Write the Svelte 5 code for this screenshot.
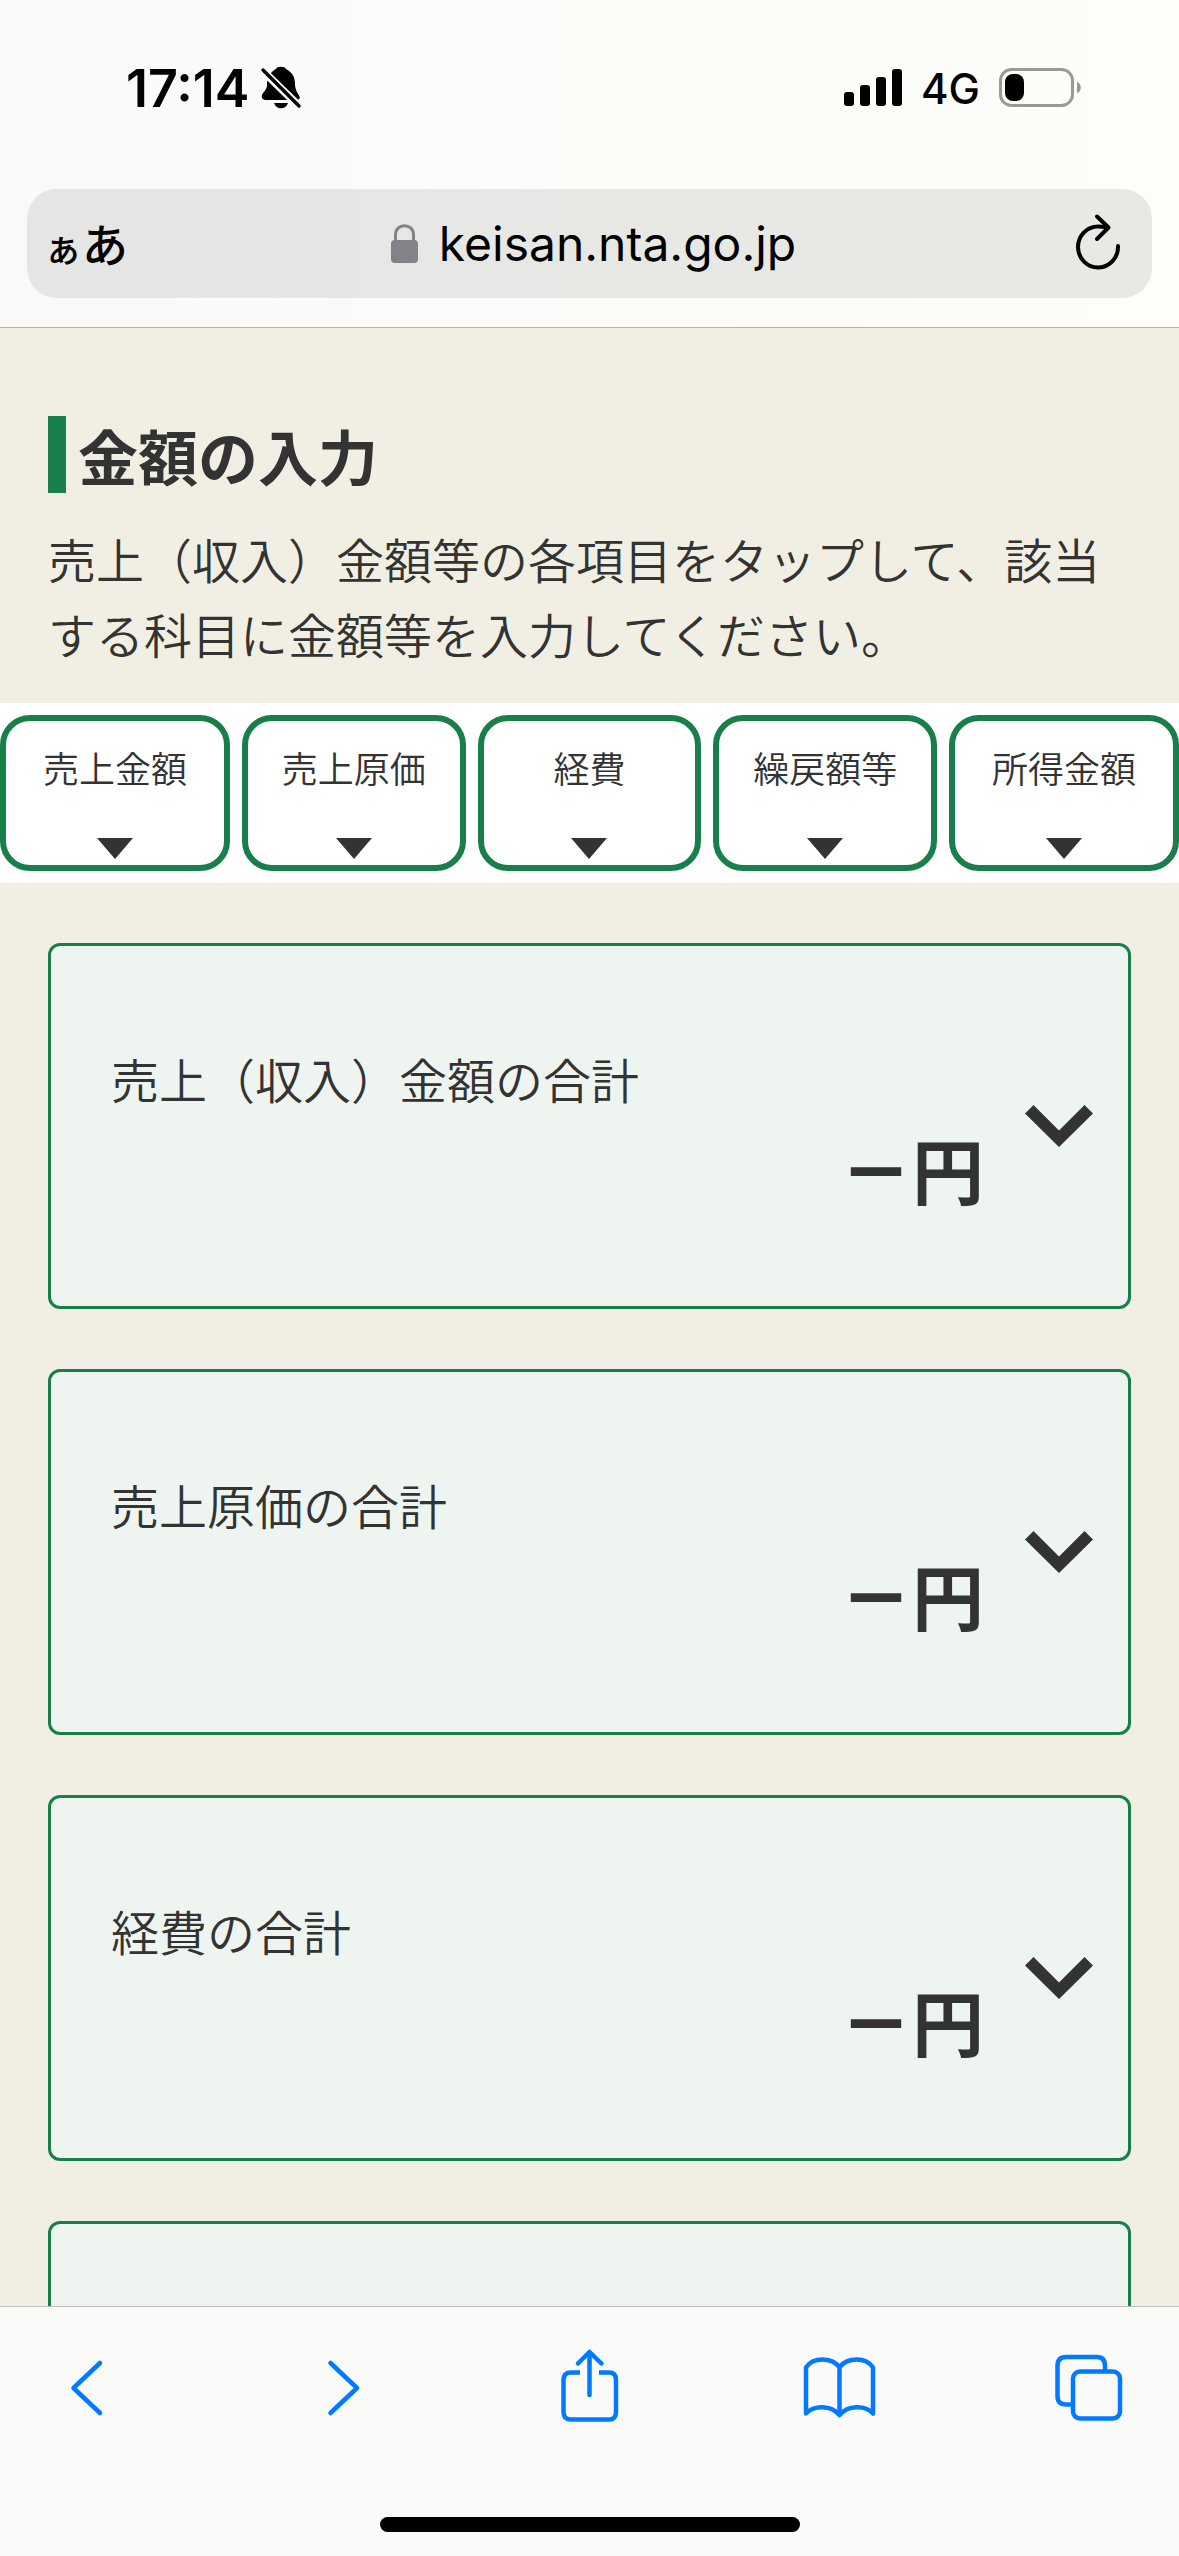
<script>
    const url = "keisan.nta.go.jp";

    const tabs = ["売上金額", "売上原価", "経費", "繰戻額等", "所得金額"];

    let sections = $state([
        { label: "売上（収入）金額の合計", open: false },
        { label: "売上原価の合計", open: false },
        { label: "経費の合計", open: false },
        { label: "繰戻額等の合計", open: false },
    ]);
</script>

<div class="screen">
    <header>
        <div class="status">
            <div class="status-left">
                <span class="time">17:14</span>
                <svg class="bell" viewBox="0 0 40 44" aria-hidden="true">
                    <path
                        d="M6 34 C2 34 0 32 1 29 C2 26 5 25 6 20 L6 17 C7 9 11 5 15 3 C16 0 24 0 25 3 C31 6 34 11 34 18 C34 25 38 28 39 32 L37 34 Z"
                    />
                    <path d="M13 37 H27 C25 44 15 44 13 37 Z" />
                    <path d="M0 3 L40 42" stroke="#fafaf9" stroke-width="8" />
                    <path
                        d="M2 4 L38 40"
                        stroke="#000"
                        stroke-width="3.4"
                        stroke-linecap="round"
                    />
                </svg>
            </div>
            <div class="status-right">
                <svg class="signal" viewBox="0 0 58 38" aria-hidden="true">
                    <rect x="0" y="23" width="10" height="14" rx="3" />
                    <rect x="16" y="16" width="10" height="21" rx="3" />
                    <rect x="32" y="8" width="10" height="29" rx="3" />
                    <rect x="48" y="0" width="10" height="37" rx="3" />
                </svg>
                <span class="network">4G</span>
                <svg class="battery" viewBox="0 0 83 40" aria-hidden="true">
                    <rect
                        x="1.5"
                        y="1.5"
                        width="72"
                        height="36"
                        rx="11"
                        fill="none"
                        stroke="#999997"
                        stroke-width="3"
                    />
                    <rect x="6" y="6" width="19" height="27" rx="8" />
                    <path d="M78 13.500 C83 16 83 23 78 25.500 Z" fill="#999997" />
                </svg>
            </div>
        </div>

        <div class="address">
            <button class="reader" aria-label="ページ設定"><small>ぁ</small>あ</button>
            <div class="url">
                <svg class="lock" viewBox="0 0 28 40" aria-hidden="true">
                    <rect x="0" y="16" width="27" height="23" rx="4" />
                    <path
                        d="M4.500 18 V11 C4.500 -1.500 22.500 -1.500 22.500 11 V18"
                        fill="none"
                        stroke="#838288"
                        stroke-width="3"
                    />
                </svg>
                <span>{url}</span>
            </div>
            <button class="reload" aria-label="再読み込み">
                <svg viewBox="0 0 48 56">
                    <path d="M44 30 A20 20.500 0 1 1 24 10.500 C28 10.500 31 11 34 11.500" />
                    <path d="M23 0.500 L34.500 11.500 L23 23" />
                </svg>
            </button>
        </div>
    </header>

    <main>
        <section class="intro">
            <h1>金額の入力</h1>
            <p>
                売上（収入）金額等の各項目をタップして、該当する科目に金額等を入力してください。
            </p>
        </section>

        <nav class="tabs">
            {#each tabs as tab}
                <button>
                    {tab}
                    <span class="triangle"></span>
                </button>
            {/each}
        </nav>

        <div class="cards">
            {#each sections as section}
                <button
                    class="card"
                    aria-expanded={section.open}
                    onclick={() => (section.open = !section.open)}
                >
                    <span class="body">
                        <span class="label">{section.label}</span>
                        <span class="amount"><span class="dash">－</span>円</span>
                    </span>
                    <svg
                        class="chevron"
                        class:open={section.open}
                        viewBox="0 0 68 42"
                        aria-hidden="true"
                    >
                        <path d="M0 8.500 L8.500 0 L34 25.500 L59.500 0 L68 8.500 L34 42 Z" />
                    </svg>
                </button>
            {/each}
        </div>
    </main>

    <footer>
        <div class="toolbar">
            <button aria-label="戻る">
                <svg viewBox="0 0 84 84">
                    <path d="M52 17 L25.500 42 L52 67" />
                </svg>
            </button>
            <button aria-label="進む">
                <svg viewBox="0 0 84 84">
                    <path d="M32.500 17 L59 42 L32.500 67" />
                </svg>
            </button>
            <button aria-label="共有">
                <svg viewBox="0 0 84 84">
                    <path
                        d="M32 26.500 H23 Q15.500 26.500 15.500 34 V66 Q15.500 73.500 23 73.500 H61 Q68 73.500 68 66 V34 Q68 26.500 61 26.500 H51"
                        stroke-linecap="butt"
                    />
                    <path d="M41.500 49 V7 M30 17.500 L41.500 6 L53.500 17.500" />
                </svg>
            </button>
            <button aria-label="ブックマーク">
                <svg viewBox="0 0 84 84">
                    <path
                        d="M42.500 21 C34 11 16 11 9 21.500 V67.500 C17 59 34 59 42.500 69 C51 59 68 59 76 67.500 V21.500 C69 11 51 11 42.500 21 V68"
                    />
                </svg>
            </button>
            <button aria-label="タブ">
                <svg viewBox="0 0 84 84">
                    <path
                        d="M58 24 V20 Q58 11 50 11 H19 Q10.500 11 10.500 20 V50 Q10.500 58.500 19 58.500 H25"
                        stroke-linecap="butt"
                    />
                    <rect x="26" y="25.500" width="47" height="47" rx="7" />
                </svg>
            </button>
        </div>
        <div class="home"></div>
    </footer>
</div>

<style>
    :global(body) {
        margin: 0;
    }
    .screen {
        display: flex;
        flex-direction: column;
        height: 100vh;
        background: #f1efe3;
        color: #333;
        font-family: "Noto Sans CJK JP", sans-serif;
        font-weight: 350;
    }
    button {
        margin: 0;
        padding: 0;
        border: none;
        background: none;
        color: inherit;
        font: inherit;
        cursor: pointer;
    }
    svg {
        display: block;
        flex: none;
        overflow: visible;
    }

    header {
        padding: 0 27px 29px;
        border-bottom: 1px solid #b2b2b2;
        background: linear-gradient(90deg, #f9f9f8, #fdfdf9);
        color: #000;
        font-family: Inter, "Noto Sans CJK JP", sans-serif;
        font-weight: 400;
    }
    .status {
        display: flex;
        align-items: center;
        justify-content: space-between;
        height: 176px;
        margin-bottom: 13px;
        padding: 0 70px 0 99px;
    }
    .status-left,
    .status-right {
        display: flex;
        align-items: center;
    }
    .status-left {
        gap: 12px;
    }
    .status-right {
        gap: 19px;
    }
    .time {
        font-size: 52px;
        font-weight: 600;
    }
    .network {
        font-size: 42px;
        font-weight: 500;
    }
    .bell {
        width: 40px;
        height: 44px;
    }
    .signal {
        width: 58px;
        height: 38px;
    }
    .battery {
        width: 83px;
        height: 40px;
    }

    .address {
        display: grid;
        grid-template-columns: 116px 1fr 108px;
        align-items: center;
        height: 109px;
        border-radius: 30px;
        background: linear-gradient(90deg, #e5e5e4, #e9e9e4);
    }
    .reader {
        padding: 0 0 4px 17px;
        font-size: 46px;
        font-weight: 500;
        text-align: left;
        white-space: nowrap;
    }
    .reader small {
        font-size: 38px;
    }
    .url {
        display: flex;
        align-items: center;
        justify-content: center;
        gap: 20px;
        font-size: 48px;
    }
    .lock {
        width: 28px;
        height: 40px;
        fill: #838288;
    }
    .reload svg {
        width: 48px;
        height: 56px;
        margin: 0 auto;
        fill: none;
        stroke: #000;
        stroke-width: 4;
        stroke-linecap: round;
        stroke-linejoin: round;
    }

    main {
        flex: 1;
        min-height: 0;
        overflow-y: auto;
        scrollbar-width: none;
    }
    .intro {
        padding: 88px 48px 32px;
    }
    h1 {
        margin: 0 0 28px;
        padding-left: 12px;
        border-left: 18px solid #197f4a;
        font-size: 60px;
        font-weight: 700;
        line-height: 77px;
    }
    p {
        margin: 0;
        font-size: 48px;
        line-height: 75px;
    }

    .tabs {
        display: grid;
        grid-template-columns: 230fr 224fr 224fr 224fr 230fr;
        gap: 12px;
        padding: 12px 0;
        background: #fff;
    }
    .tabs button {
        display: flex;
        flex-direction: column;
        align-items: center;
        gap: 44px;
        padding: 19px 0 6px;
        border: 6px solid #197f4a;
        border-radius: 30px;
        font-size: 36px;
        line-height: 54px;
    }
    .triangle {
        border: 18px solid transparent;
        border-top: 21px solid #333;
        border-bottom: none;
    }

    .cards {
        display: flex;
        flex-direction: column;
        gap: 60px;
        padding: 60px 48px;
    }
    .card {
        display: flex;
        align-items: center;
        gap: 41px;
        padding: 0 35px 0 60px;
        border: 3px solid #197f4a;
        border-radius: 12px;
        background: #eef5f1;
        text-align: left;
    }
    .body {
        display: flex;
        flex: 1;
        flex-direction: column;
        padding: 96px 0 84px;
    }
    .label {
        font-size: 48px;
        line-height: 72px;
    }
    .amount {
        font-size: 72px;
        font-weight: 700;
        line-height: 108px;
        text-align: right;
    }
    .dash {
        font-weight: 900;
    }
    .chevron {
        width: 68px;
        height: 42px;
        fill: #333;
    }
    .chevron.open {
        transform: rotate(180deg);
    }

    footer {
        padding: 39px 48px 24px;
        border-top: 1px solid #c0c0c0;
        background: #fafbf9;
    }
    .toolbar {
        display: flex;
        justify-content: space-between;
    }
    .toolbar svg {
        width: 84px;
        height: 84px;
        fill: none;
        stroke: #007aff;
        stroke-width: 4.5;
        stroke-linecap: round;
        stroke-linejoin: round;
    }
    .home {
        width: 420px;
        height: 15px;
        margin: 87px auto 0;
        border-radius: 8px;
        background: #000;
    }
</style>
